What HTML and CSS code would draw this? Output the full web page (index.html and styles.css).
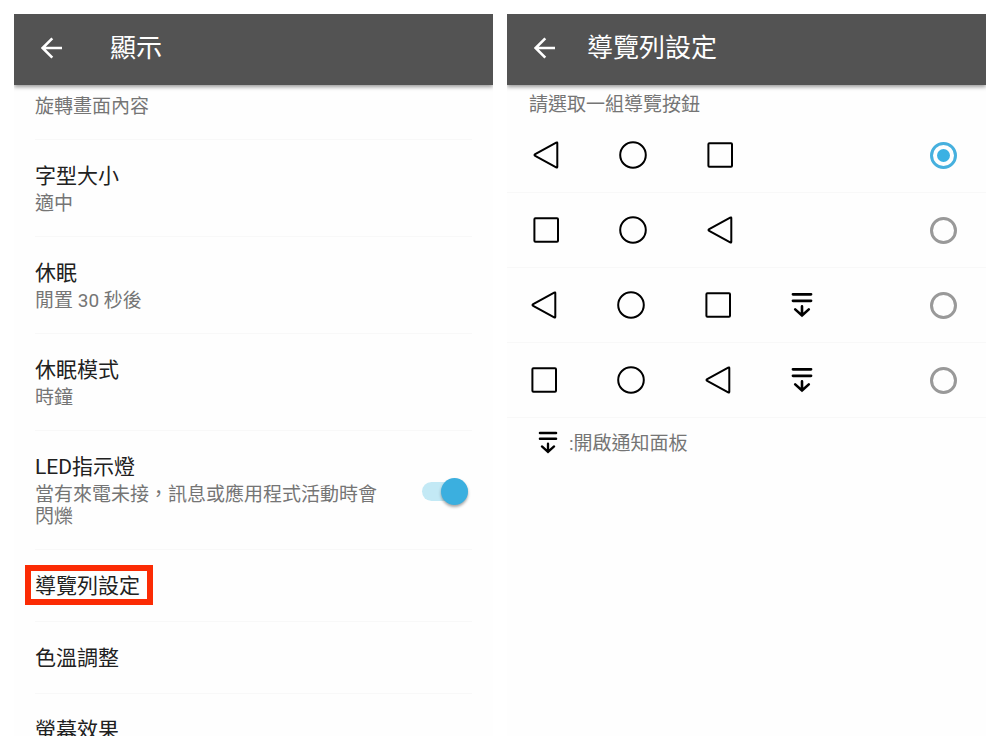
FILE: index.html
```html
<!DOCTYPE html>
<html lang="zh-Hant">
<head>
    <meta charset="UTF-8">
    <meta name="viewport" content="width=device-width, initial-scale=1.0">
    <title>導覽列設定</title>
    <link rel="stylesheet" href="styles.css">
</head>
<body>
    <!-- 共用圖示 -->
    <svg class="icon-defs" aria-hidden="true">
        <symbol id="arrow" viewBox="0 0 22 22">
            <path d="M21 11H2M11.3 1.3L1.6 11l9.7 9.7" fill="none" stroke="currentColor" stroke-width="2.6"/>
        </symbol>
        <symbol id="back" viewBox="0 0 28 28">
            <path d="M24.2 1.6Q25.3 1 25.3 2.2V25.8Q25.3 27 24.2 26.4L3.2 14.8Q1.8 14 3.2 13.2Z" fill="none" stroke="currentColor" stroke-width="2"/>
        </symbol>
        <symbol id="home" viewBox="0 0 28 28">
            <circle cx="14" cy="14" r="12.8" fill="none" stroke="currentColor" stroke-width="2"/>
        </symbol>
        <symbol id="recent" viewBox="0 0 28 28">
            <rect x="2.4" y="2.2" width="23.6" height="23.6" rx="1" fill="none" stroke="currentColor" stroke-width="2"/>
        </symbol>
        <symbol id="panel" viewBox="0 0 22 28">
            <path d="M2 3.3H20M2 9.8H20" fill="none" stroke="currentColor" stroke-width="2.8" stroke-linecap="round"/>
            <path d="M11 15.4V24.4M4.2 18.4L11 24.5L17.8 18.4" fill="none" stroke="currentColor" stroke-width="2.6" stroke-linecap="round"/>
        </symbol>
    </svg>

    <main class="screens">
        <section class="screen">
            <header class="bar">
                <button class="bar-back" type="button" aria-label="返回"><svg><use href="#arrow"/></svg></button>
                <h1>顯示</h1>
            </header>
            <ul class="list">
                <li class="row row-cut"><p class="summary">旋轉畫面內容</p></li>
                <li class="row">
                    <h2>字型大小</h2>
                    <p class="summary">適中</p>
                </li>
                <li class="row">
                    <h2>休眠</h2>
                    <p class="summary">閒置 30 秒後</p>
                </li>
                <li class="row">
                    <h2>休眠模式</h2>
                    <p class="summary">時鐘</p>
                </li>
                <li class="row row-switch">
                    <label for="led">
                        <span class="title">LED指示燈</span>
                        <span class="summary">當有來電未接，訊息或應用程式活動時會閃爍</span>
                    </label>
                    <input class="switch" id="led" type="checkbox" checked>
                </li>
                <li class="row"><h2><a class="highlight" href="#navbar">導覽列設定</a></h2></li>
                <li class="row"><h2>色溫調整</h2></li>
                <li class="row"><h2>螢幕效果</h2></li>
            </ul>
        </section>

        <section class="screen" id="navbar">
            <header class="bar bar-sub">
                <button class="bar-back" type="button" aria-label="返回"><svg><use href="#arrow"/></svg></button>
                <h1>導覽列設定</h1>
            </header>
            <p class="hint">請選取一組導覽按鈕</p>
            <form class="options">
                <label class="option">
                    <svg class="key"><use href="#back"/></svg>
                    <svg class="key"><use href="#home"/></svg>
                    <svg class="key"><use href="#recent"/></svg>
                    <input type="radio" name="keys" aria-label="返回、主畫面、最近" checked>
                </label>
                <label class="option">
                    <svg class="key"><use href="#recent"/></svg>
                    <svg class="key"><use href="#home"/></svg>
                    <svg class="key"><use href="#back"/></svg>
                    <input type="radio" name="keys" aria-label="最近、主畫面、返回">
                </label>
                <label class="option option-four">
                    <svg class="key"><use href="#back"/></svg>
                    <svg class="key"><use href="#home"/></svg>
                    <svg class="key"><use href="#recent"/></svg>
                    <svg class="key key-panel"><use href="#panel"/></svg>
                    <input type="radio" name="keys" aria-label="返回、主畫面、最近、通知面板">
                </label>
                <label class="option option-four">
                    <svg class="key"><use href="#recent"/></svg>
                    <svg class="key"><use href="#home"/></svg>
                    <svg class="key"><use href="#back"/></svg>
                    <svg class="key key-panel"><use href="#panel"/></svg>
                    <input type="radio" name="keys" aria-label="最近、主畫面、返回、通知面板">
                </label>
            </form>
            <div class="legend">
                <svg><use href="#panel"/></svg>
                <span class="summary">:開啟通知面板</span>
            </div>
        </section>
    </main>
</body>
</html>
```
FILE: styles.css
```css
* {
    box-sizing: border-box;
}
body {
    margin: 0;
    background: #fff;
    color: #212121;
    font-family: Roboto, "Noto Sans CJK TC", sans-serif;
}
h1, h2, p, ul {
    margin: 0;
    padding: 0;
    font-weight: normal;
}
a {
    color: inherit;
    text-decoration: none;
}
svg {
    display: block;
    flex: none;
}
.icon-defs {
    position: absolute;
    width: 0;
    height: 0;
}

.screens {
    display: grid;
    grid-template-columns: 1fr 1fr;
    gap: 14px;
    height: 100vh;
    padding: 14px;
}
.screen {
    overflow: hidden;
    background: #fefefe;
}

/* 標題列 */
.bar {
    display: flex;
    align-items: center;
    gap: 47px;
    height: 71px;
    padding: 0 27px 3px;
    background: #535353;
    color: #fff;
    box-shadow: 0 2px 4px rgba(0, 0, 0, 0.4);
}
.bar-sub {
    gap: 31px;
}
.bar h1 {
    font-size: 26px;
    line-height: 36px;
}
.bar-back {
    padding: 0;
    border: none;
    background: none;
    color: inherit;
    cursor: pointer;
}
.bar-back svg {
    width: 22px;
    height: 22px;
}

/* 設定清單 */
.list {
    margin: 0 21px;
    list-style: none;
}
.row {
    padding: 23px 0 21px;
    border-bottom: 1px solid #f8f8f8;
}
.row-cut {
    padding-top: 11px;
}
.row h2, .title {
    display: block;
    font-size: 21px;
    line-height: 27px;
}
.summary {
    display: block;
    color: #757575;
    font-size: 19px;
    line-height: 22px;
}
.row h2 + .summary, .title + .summary {
    margin-top: 3px;
}
.row-switch {
    display: flex;
    align-items: center;
    justify-content: space-between;
    gap: 42px;
    padding-right: 4px;
}
.highlight {
    display: inline-block;
    position: relative;
    vertical-align: top;
}
.highlight::before {
    content: "";
    position: absolute;
    inset: -8px -13px -5px -10px;
    border: 6px solid #fb2b04;
}

.switch {
    appearance: none;
    position: relative;
    flex: none;
    width: 46px;
    height: 19px;
    margin: 0;
    border-radius: 10px;
    background: #c3e9f5;
    cursor: pointer;
}
.switch::before {
    content: "";
    position: absolute;
    top: -4px;
    left: 0;
    width: 27px;
    height: 27px;
    border-radius: 50%;
    background: #fafafa;
    box-shadow: 0 2px 3px rgba(0, 0, 0, 0.35);
}
.switch:checked::before {
    left: 19px;
    background: #3bafdf;
}

/* 導覽按鈕選項 */
.hint {
    padding: 9px 22px 2px;
    color: #757575;
    font-size: 19px;
    line-height: 22px;
}
.option {
    display: flex;
    align-items: center;
    gap: 59px;
    height: 75px;
    padding: 0 29px 0 25px;
    border-bottom: 1px solid #f8f8f8;
    color: #000;
    cursor: pointer;
}
.option-four {
    padding-left: 23px;
}
.key {
    width: 28px;
    height: 28px;
}
.key-panel {
    width: 22px;
}
.option input {
    appearance: none;
    display: grid;
    place-items: center;
    width: 27px;
    height: 27px;
    margin: 0 0 0 auto;
    border: 3px solid #999;
    border-radius: 50%;
}
.option input:checked {
    border-color: #46b0de;
}
.option input:checked::before {
    content: "";
    width: 13px;
    height: 13px;
    border-radius: 50%;
    background: #3bb1e3;
}
.legend {
    display: flex;
    align-items: flex-end;
    gap: 11px;
    padding: 12px 31px;
    color: #000;
}
.legend svg {
    width: 20px;
    height: 25px;
}
```
